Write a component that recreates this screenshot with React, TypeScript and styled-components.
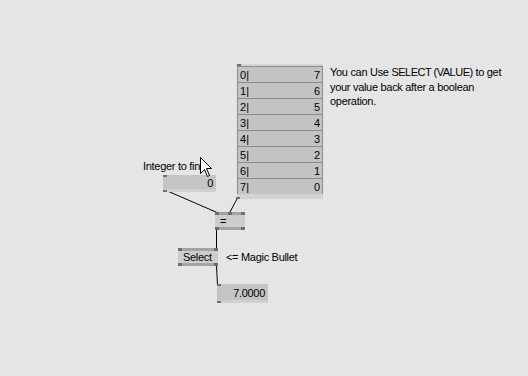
import React from "react";
import styled, { createGlobalStyle } from "styled-components";

const GlobalStyle = createGlobalStyle`
  html, body {
    margin: 0;
    padding: 0;
    background: #e5e5e5;
  }
  body {
    font-family: Tahoma, "Liberation Sans", Arial, sans-serif;
  }
`;

const tableValues = [7, 6, 5, 4, 3, 2, 1, 0];

function Pins({ count, bottom }: { count: number; bottom?: boolean }) {
  return (
    <PinStrip bottom={bottom}>
      {Array.from({ length: count }).map((_, i) => (
        <Pin key={i} />
      ))}
    </PinStrip>
  );
}

function App() {
  return (
    <>
      <GlobalStyle />
      <Patch>
        <Links width="528" height="376">
          <line x1="167.5" y1="191" x2="217" y2="212.5" stroke="#000" />
          <line x1="237.5" y1="198" x2="230" y2="212" stroke="#000" />
          <line x1="216.5" y1="230" x2="216.5" y2="248" stroke="#000" />
          <line x1="216.5" y1="266" x2="217.5" y2="285" stroke="#000" />
        </Links>

        <Sheet style={{ left: 237, top: 64 }}>
          <SheetTop>
            <Pin />
          </SheetTop>
          {tableValues.map((v, i) => (
            <SheetRow key={i}>
              <span>{i}|</span>
              <span>{v}</span>
            </SheetRow>
          ))}
          <SheetBottom>
            <Pin />
          </SheetBottom>
        </Sheet>

        <Comment style={{ left: 330, top: 65 }}>
          You can Use <Caps>SELECT (VALUE)</Caps> to get
          <br />
          your value back after a boolean
          <br />
          operation.
        </Comment>

        <Label style={{ left: 143, top: 159 }}>Integer to find</Label>

        <IOBox style={{ left: 163, top: 175, width: 53 }}>
          <IOTop>
            <Pin />
          </IOTop>
          <IOValue>0</IOValue>
          <IOBottom>
            <Pin />
          </IOBottom>
        </IOBox>

        <Node style={{ left: 215, top: 212, width: 30 }}>
          <Pins count={3} />
          <NodeName>=</NodeName>
          <Pins count={2} bottom />
        </Node>

        <Node style={{ left: 178, top: 248, width: 40 }}>
          <Pins count={2} />
          <NodeName>Select</NodeName>
          <Pins count={2} bottom />
        </Node>

        <Label style={{ left: 226, top: 250 }}>&lt;= Magic Bullet</Label>

        <IOBox style={{ left: 217, top: 284, width: 51 }}>
          <IOTop>
            <Pin />
          </IOTop>
          <IOValue tall>7.0000</IOValue>
          <IOBottom>
            <Pin />
          </IOBottom>
        </IOBox>

        <Cursor width="14" height="22" viewBox="0 0 14 22" style={{ left: 200, top: 157 }}>
          <path
            d="M0.5 0.5 L0.5 16.5 L4.5 12.5 L7.5 19.5 L9.5 18.5 L6.5 11.5 L11.5 11.5 Z"
            fill="#fff"
            stroke="#000"
            strokeWidth="1"
          />
        </Cursor>
      </Patch>
    </>
  );
}

const Patch = styled.div`
  position: relative;
  width: 528px;
  height: 376px;
  overflow: hidden;
  background: #e5e5e5;
  font-size: 11px;
  letter-spacing: -0.3px;
  color: #000;
`;

const Links = styled.svg`
  position: absolute;
  left: 0;
  top: 0;
  pointer-events: none;
`;

const Pin = styled.div`
  width: 4px;
  height: 2px;
  background: #6e6e6e;
`;

const PinStrip = styled.div<{ bottom?: boolean }>`
  display: flex;
  justify-content: space-between;
  align-items: ${({ bottom }) => (bottom ? "flex-end" : "flex-start")};
  height: 3px;
  background: #a3a3a3;
  & > div {
    height: 3px;
  }
`;

const Sheet = styled.div`
  position: absolute;
  width: 86px;
  display: flex;
  flex-direction: column;
`;

const SheetTop = styled.div`
  height: 2px;
  background: #d4d4d4;
`;

const SheetRow = styled.div`
  display: flex;
  justify-content: space-between;
  align-items: center;
  padding: 1px 2px 0 2px;
  box-sizing: border-box;
  height: 16px;
  background: #c3c3c3;
  border: 1px solid #8c8c8c;
  border-bottom: none;
  line-height: 15px;
  letter-spacing: 0;
  &:last-of-type {
    border-bottom: 1px solid #8c8c8c;
    height: 17px;
  }
`;

const SheetBottom = styled.div`
  display: flex;
  align-items: flex-end;
  height: 5px;
  margin-left: -1px;
  background: linear-gradient(to right, transparent 1px, #d2d2d2 1px);
`;

const Comment = styled.div`
  position: absolute;
  line-height: 14.5px;
  white-space: nowrap;
`;

const Caps = styled.span`
  letter-spacing: -0.5px;
`;

const Label = styled.div`
  position: absolute;
  white-space: nowrap;
  line-height: 14px;
`;

const IOBox = styled.div`
  position: absolute;
  display: flex;
  flex-direction: column;
  background: #c4c4c4;
`;

const IOTop = styled.div`
  height: 2px;
`;

const IOValue = styled.div<{ tall?: boolean }>`
  height: ${({ tall }) => (tall ? 14 : 12)}px;
  line-height: ${({ tall }) => (tall ? 14 : 12)}px;
  text-align: right;
  padding-right: 3px;
`;

const IOBottom = styled.div`
  display: flex;
  align-items: flex-end;
  height: 3px;
  background: #d0d0d0;
`;

const Node = styled.div`
  position: absolute;
  display: flex;
  flex-direction: column;
  background: #cdcdcd;
`;

const NodeName = styled.div`
  height: 12px;
  line-height: 12px;
  padding-left: 5px;
`;

const Cursor = styled.svg`
  position: absolute;
`;

export default App;
